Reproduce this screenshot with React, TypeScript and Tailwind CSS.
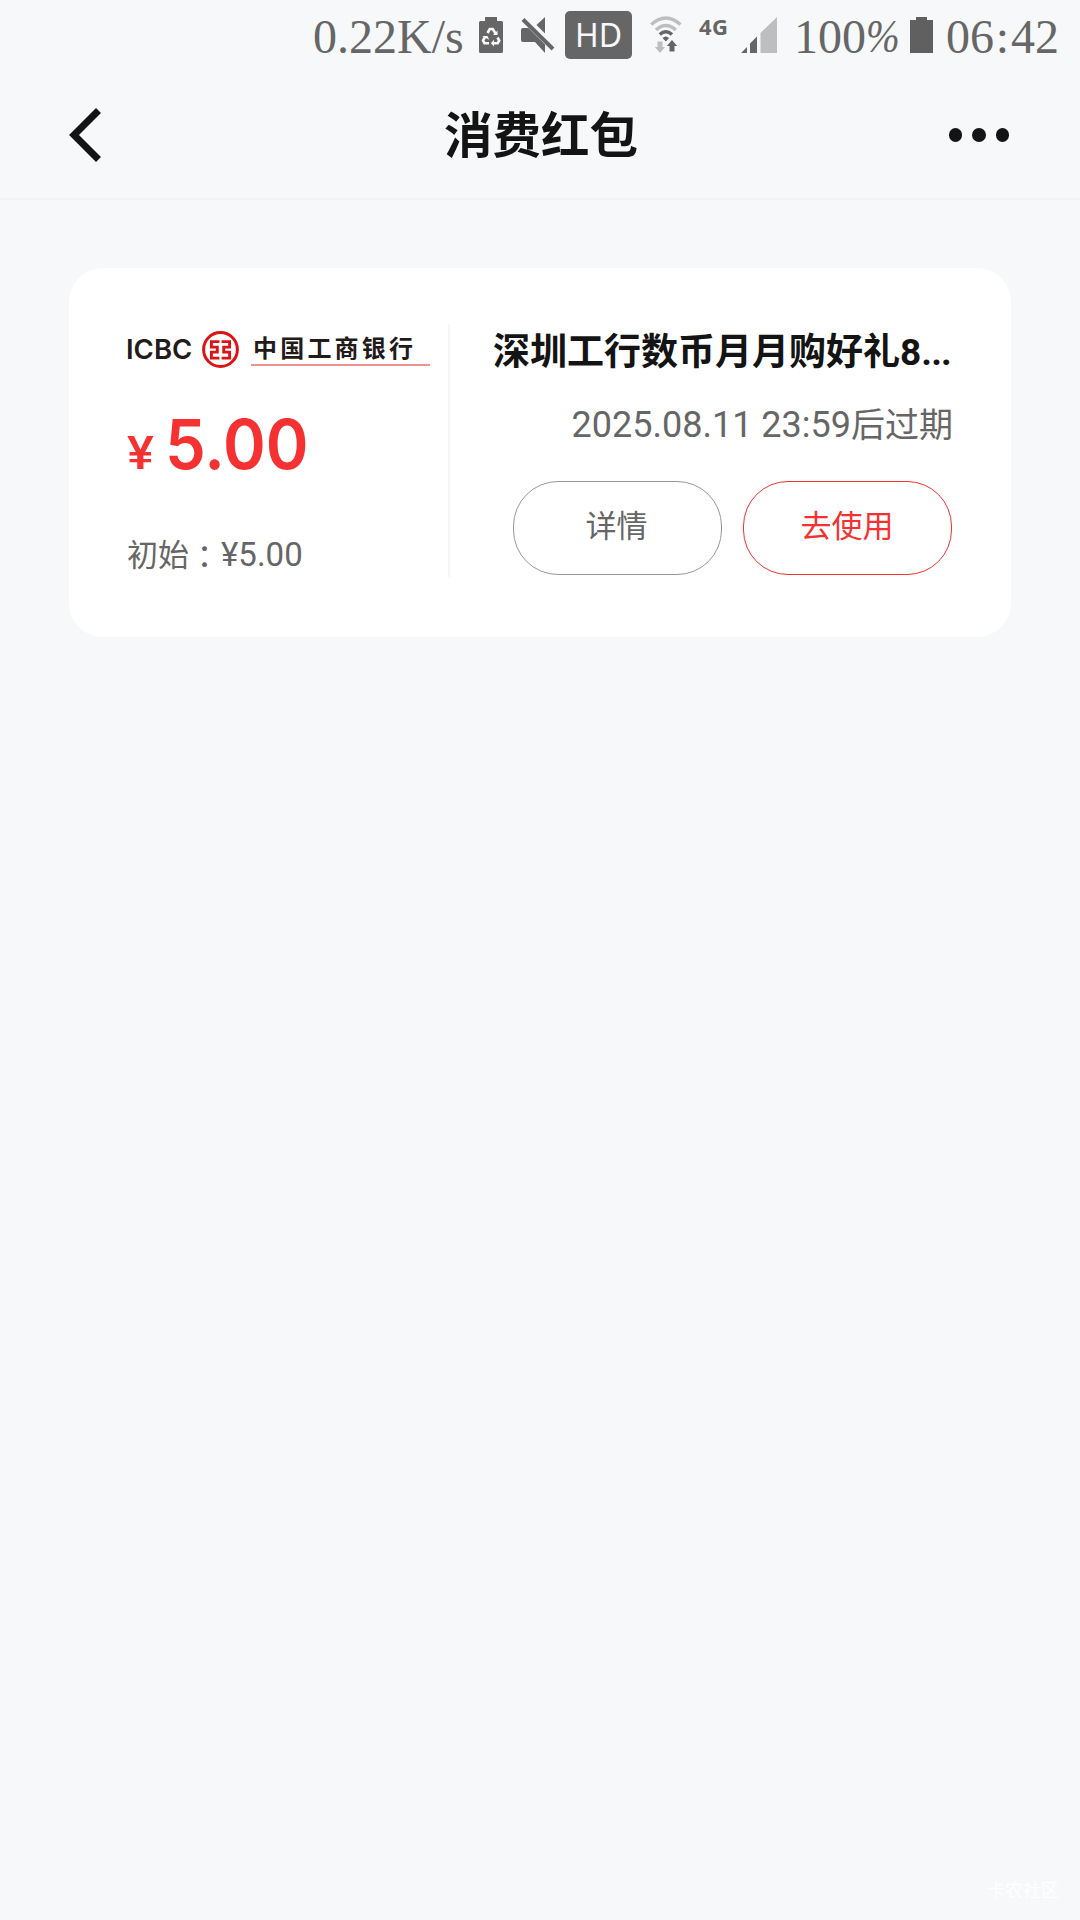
import React from "react";

const CJK = "font-['Roboto','Noto_Sans_CJK_SC',sans-serif]";

function StatusBar() {
  return (
    <div className="flex h-[72px] w-full items-start text-[#666] font-['Liberation_Serif',serif] text-[48px] leading-[74px]">
      <span className="ml-[313px] w-[166px] shrink-0 whitespace-nowrap">0.22K/s</span>
      <svg className="mt-[17px] shrink-0" width="24" height="36" viewBox="0 0 24 36">
        <path fill="#666" d="M6 0h12v4h4.500q1.500 0 1.500 1.500v29q0 1.500-1.500 1.500H1.500q-1.500 0-1.500-1.500v-29q0-1.500 1.500-1.500H6z" />
        <g fill="none" stroke="#f7f8fa" strokeWidth="2.600">
          <path d="M8.500 16L10.800 12h3l2.800 4.600" />
          <path d="M18.500 20.500l1.700 3-1.500 2.700h-4.200" />
          <path d="M6.300 19.500L4 23.500l1.500 2.700h4.500" />
        </g>
        <path fill="#f7f8fa" d="M18.500 13.500v4.500h-4.500zM15 22.800v6.700l-3.200-3.300zM3 19h5.500l1.700 3.700z" />
      </svg>
      <svg className="ml-[18px] mt-[17px] shrink-0" width="34" height="36" viewBox="0 0 34 36">
        <path fill="#666" d="M24 0v16.500L15.500 8zM0 13q0-2 2-2h5.500L24 27.500V36l-10-11H2q-2 0-2-2z" />
        <path d="M2 2.500L32 32" stroke="#666" strokeWidth="4" />
      </svg>
      <span className="ml-[10px] mt-[11px] flex h-[48px] w-[67px] shrink-0 items-center justify-center rounded-[5px] bg-[#666] font-['Noto_Sans',sans-serif] text-[32px] leading-[46px] text-[#f7f8fa]">HD</span>
      <svg className="ml-[18px] mt-[15px] shrink-0" width="32" height="38" viewBox="0 0 32 38">
        <g fill="none" strokeWidth="3.400">
          <path stroke="#bdbec0" d="M1.200 9.500Q15.800-3.500 30.500 9.500" />
          <path stroke="#bdbec0" d="M6 15Q15.800 6 25.800 15" />
          <path stroke="#666" d="M9.800 19.500Q15.800 14 22 19.500" />
        </g>
        <path fill="#666" d="M12.500 23q3.300-3 6.600 0l-3.300 3.500zM22 25l5.200 6h-2.700v5.500h-5V31h-2.700z" />
        <path fill="#bdbec0" d="M10 38l-5.200-6h2.700v-5.500h5V32h2.700z" />
      </svg>
      <span className="ml-[17px] w-[42px] shrink-0 font-['Noto_Sans',sans-serif] text-[22px] font-bold leading-[53px] tracking-[0.5px]">4G</span>
      <svg className="mt-[17px] shrink-0" width="37" height="36" viewBox="0 0 37 36">
        <path fill="#666" d="M0 36l6-6v6zM9 36V26.500l7-7V36z" />
        <path fill="#bdbec0" d="M19.500 36V16L36 0v36z" />
      </svg>
      <span className="ml-[16px] w-[71px] shrink-0">100</span>
      <span className="w-[45px] shrink-0 origin-left translate-x-px scale-x-[.88] italic text-[46px]">%</span>
      <svg className="mt-[17px] shrink-0" width="23" height="36" viewBox="0 0 23 36">
        <path fill="#606060" d="M6 0h11v3h6v33H0V3h6z" />
      </svg>
      <span className="ml-[13px] flex shrink-0"><span>06</span><span className="w-[17px] text-center">:</span><span>42</span></span>
    </div>
  );
}

function Header() {
  return (
    <header className={`grid h-[128px] w-full grid-cols-[1fr_auto_1fr] items-center border-b-2 border-[#f1f2f4] pl-[70px] pr-[70px] ${CJK}`}>
      <svg className="-translate-x-px" width="33" height="54" viewBox="0 0 33 54">
        <path d="M29.500 2.500L5 27 29.500 51.500" fill="none" stroke="#141414" strokeWidth="7" />
      </svg>
      <h1 className="translate-x-px pt-[3px] text-[48.500px] font-bold leading-[60px] text-[#141414]">消费红包</h1>
      <div className="flex -translate-x-px gap-[10px] justify-self-end">
        <i className="size-[13.500px] rounded-full bg-[#141414]" />
        <i className="size-[13.500px] rounded-full bg-[#141414]" />
        <i className="size-[13.500px] rounded-full bg-[#141414]" />
      </div>
    </header>
  );
}

function BankLogo() {
  return (
    <div className="flex h-[40px] w-[303px] items-start text-[#231a1a]">
      <span className="mt-[3px] w-[75px] shrink-0 -translate-x-px font-['Inter',sans-serif] text-[27.500px] font-semibold leading-[32px]">ICBC</span>
      <svg className="mt-[1px] shrink-0" width="37" height="37" viewBox="0 0 37 37">
        <circle cx="18.500" cy="18.500" r="16.900" fill="none" stroke="#dc1418" strokeWidth="3" />
        <g fill="none" stroke="#dc1418" strokeWidth="2.900">
          <path d="M17.400 10.600H9.400v5.500h5.900v5H9.400v6h8" />
          <path d="M19.600 10.600h8v5.500h-5.900v5h5.900v6h-8" />
        </g>
      </svg>
      <div className="ml-[12px] w-[179px] border-b-2 border-[#ee9292] pb-px">
        <div className="whitespace-nowrap pl-[2px] pt-px font-['Noto_Sans_CJK_SC',sans-serif] text-[24px] font-bold leading-[32px] tracking-[3.200px]">中国工商银行</div>
      </div>
    </div>
  );
}

function Coupon() {
  return (
    <section className={`mx-[69px] mt-[68px] flex h-[369px] rounded-[34px] bg-white ${CJK}`}>
      <div className="flex w-[379px] shrink-0 flex-col pl-[58px] pt-[62px]">
        <BankLogo />
        <div className="mt-[38px] flex h-[72px] items-baseline text-[#f53131]">
          <span className="w-[38px] origin-left scale-x-[1.1] text-[46px] font-medium leading-[72px]">¥</span>
          <span className="origin-left scale-x-[.94] font-['Inter',sans-serif] text-[69px] font-[560] leading-[72px]">5.00</span>
        </div>
        <div className="mt-[53px] flex items-baseline whitespace-nowrap text-[31px] leading-[40px] text-[#666]">
          初始<span className="translate-y-[2px] font-['Noto_Sans_CJK_TC',sans-serif]" lang="zh-TW">：</span><span className="translate-x-px text-[33px]">¥5.00</span>
        </div>
      </div>
      <div className="mt-[56px] h-[253px] w-[2px] bg-[#f6f6f6]" />
      <div className="flex flex-1 flex-col items-end pr-[59px] pt-[61px]">
        <h2 className="w-[459px] whitespace-nowrap text-[37px] font-bold leading-[48px] text-[#141414]">深圳工行数币月月购好礼8<span className="tracking-[-0.8px]">...</span></h2>
        <p className="mt-[26px] flex translate-x-px items-baseline whitespace-nowrap text-[34px] leading-[44px] text-[#666]"><span className="text-[36px]">2025.08.11 23:59</span>后过期</p>
        <div className="mt-[34px] flex gap-[21px] text-[31px] leading-[86px]">
          <button className="h-[94px] w-[209px] rounded-[45px] border border-[#999] pb-[2px] pr-[2px] text-[#666]">详情</button>
          <button className="h-[94px] w-[209px] rounded-[45px] border border-[#f53131] pb-[2px] pr-px text-[#f53131]">去使用</button>
        </div>
      </div>
    </section>
  );
}

export default function App() {
  return (
    <main className="flex h-[1920px] w-[1080px] flex-col overflow-hidden bg-[#f7f8fa]">
      <StatusBar />
      <Header />
      <Coupon />
      <footer className="mb-[19px] mr-[21px] mt-auto self-end font-['Noto_Sans_CJK_SC',sans-serif] text-[18px] leading-[24px] text-white">卡农社区</footer>
    </main>
  );
}
